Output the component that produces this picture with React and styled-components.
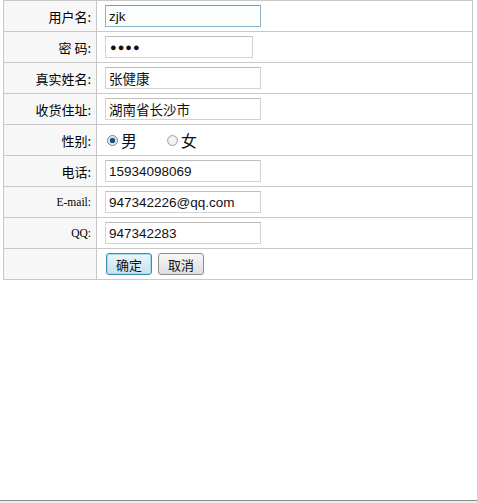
import styled, { createGlobalStyle } from 'styled-components'

const GlobalStyle = createGlobalStyle`
  html, body {
    margin: 0;
    padding: 0;
    background: #ffffff;
  }
  body {
    font-family: "Noto Sans CJK SC", "DejaVu Sans", sans-serif;
    font-size: 12px;
    color: #000;
  }
`

const FIELDS = [
  { label: '用户名:', value: 'zjk', width: 156, focused: true },
  { label: '密 码:', value: '●●●●', width: 148, password: true },
  { label: '真实姓名:', value: '张健康', width: 156 },
  { label: '收货住址:', value: '湖南省长沙市', width: 156 },
  { label: '性别:', radio: true },
  { label: '电话:', value: '15934098069', width: 156 },
  { label: 'E-mail:', value: '947342226@qq.com', width: 156, latin: true },
  { label: 'QQ:', value: '947342283', width: 156, latin: true }
]

function Radio({ checked, label }) {
  return (
    <RadioItem>
      <RadioDot $checked={checked} />
      <RadioLabel>{label}</RadioLabel>
    </RadioItem>
  )
}

export default function App() {
  return (
    <Page>
      <GlobalStyle />
      <Content>
        <FormTable>
          <tbody>
            {FIELDS.map((field) => (
              <Row key={field.label}>
                <LabelCell $latin={field.latin}>{field.label}</LabelCell>
                <ValueCell>
                  {field.radio ? (
                    <RadioGroup>
                      <Radio checked label="男" />
                      <Radio label="女" />
                    </RadioGroup>
                  ) : (
                    <TextBox
                      $width={field.width}
                      $focused={field.focused}
                      $password={field.password}
                    >
                      {field.value}
                    </TextBox>
                  )}
                </ValueCell>
              </Row>
            ))}
            <Row>
              <LabelCell />
              <ValueCell>
                <ButtonRow>
                  <FormButton $primary>确定</FormButton>
                  <FormButton>取消</FormButton>
                </ButtonRow>
              </ValueCell>
            </Row>
          </tbody>
        </FormTable>
      </Content>
      <StatusBar />
    </Page>
  )
}

const Page = styled.div`
  display: flex;
  flex-direction: column;
  min-height: 100vh;
`

const Content = styled.div`
  flex: 1;
  padding: 0 4px 0 3px;
`

const FormTable = styled.table`
  width: 470px;
  border-collapse: collapse;
  border: 1px solid #c8c8c8;
`

const Row = styled.tr`
  height: 31px;
`

const LabelCell = styled.td`
  width: 93px;
  padding: 0 5px 0 0;
  box-sizing: border-box;
  border: 1px solid #c8c8c8;
  background: #f7f7f7;
  text-align: right;
  vertical-align: middle;
  font-family: ${(props) =>
    props.$latin
      ? '"Liberation Serif", "Times New Roman", serif'
      : '"Noto Sans CJK SC", sans-serif'};
  font-size: ${(props) => (props.$latin ? '11.5px' : '13px')};
  font-weight: 400;
  color: #000;
`

const ValueCell = styled.td`
  padding: 0 0 0 8px;
  border: 1px solid #c8c8c8;
  background: #ffffff;
  vertical-align: middle;
`

const TextBox = styled.div`
  display: flex;
  align-items: center;
  width: ${(props) => props.$width}px;
  height: 22px;
  box-sizing: border-box;
  padding: 0 3px;
  border: 1px solid ${(props) => (props.$focused ? '#8fb3c9' : '#d2d2d2')};
  border-top-color: ${(props) => (props.$focused ? '#7a9db3' : '#bdbdbd')};
  background: ${(props) => (props.$focused ? '#fbfefe' : '#ffffff')};
  font-family: "Liberation Sans", "Noto Sans CJK SC", sans-serif;
  font-size: ${(props) => (props.$password ? '11px' : '13.5px')};
  letter-spacing: ${(props) => (props.$password ? '1px' : '0')};
  padding-left: ${(props) => (props.$password ? '4px' : '3px')};
  color: #111;
`

const RadioGroup = styled.div`
  display: flex;
  align-items: center;
  gap: 30px;
  padding-left: 2px;
`

const RadioItem = styled.span`
  display: inline-flex;
  align-items: center;
  gap: 3px;
`

const RadioDot = styled.span`
  width: 11px;
  height: 11px;
  box-sizing: border-box;
  border-radius: 50%;
  border: 1px solid ${(props) => (props.$checked ? '#6d8aa3' : '#a9a9a9')};
  background: ${(props) =>
    props.$checked
      ? 'radial-gradient(circle, #1f4f80 0 2.5px, #dfe8f0 3px)'
      : 'radial-gradient(circle, #f4f4f4 0 3px, #dcdcdc 5px)'};
`

const RadioLabel = styled.span`
  font-size: 16px;
  line-height: 1;
  color: #111;
`

const ButtonRow = styled.div`
  display: flex;
  gap: 6px;
  padding-left: 1px;
`

const FormButton = styled.button`
  width: 46px;
  height: 22px;
  padding: 0;
  box-sizing: border-box;
  border: 1px solid ${(props) => (props.$primary ? '#3f8fb0' : '#8e8e8e')};
  border-radius: 3px;
  background: ${(props) =>
    props.$primary
      ? 'linear-gradient(#e9f5fb, #c9e3ef)'
      : 'linear-gradient(#f7f7f7, #dedede)'};
  box-shadow: ${(props) => (props.$primary ? 'inset 0 0 0 1px #a9d6e9' : 'none')};
  font-family: "Noto Sans CJK SC", sans-serif;
  font-size: 13px;
  color: #111;
`

const StatusBar = styled.div`
  height: 2px;
  border-top: 1px solid #8a8a86;
  background: #ececec;
`
